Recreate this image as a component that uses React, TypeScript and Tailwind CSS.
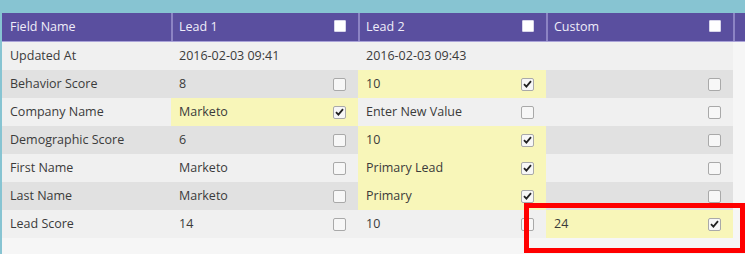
import type { ReactNode } from "react";

type Cell = { value: string; checked?: boolean; highlight?: boolean; noBox?: boolean };

type Row = {
  field: string;
  lead1: Cell;
  lead2: Cell;
  custom: Cell;
};

const rows: Row[] = [
  {
    field: "Updated At",
    lead1: { value: "2016-02-03 09:41", noBox: true },
    lead2: { value: "2016-02-03 09:43", noBox: true },
    custom: { value: "", noBox: true },
  },
  {
    field: "Behavior Score",
    lead1: { value: "8" },
    lead2: { value: "10", checked: true, highlight: true },
    custom: { value: "" },
  },
  {
    field: "Company Name",
    lead1: { value: "Marketo", checked: true, highlight: true },
    lead2: { value: "Enter New Value" },
    custom: { value: "" },
  },
  {
    field: "Demographic Score",
    lead1: { value: "6" },
    lead2: { value: "10", checked: true, highlight: true },
    custom: { value: "" },
  },
  {
    field: "First Name",
    lead1: { value: "Marketo" },
    lead2: { value: "Primary Lead", checked: true, highlight: true },
    custom: { value: "" },
  },
  {
    field: "Last Name",
    lead1: { value: "Marketo" },
    lead2: { value: "Primary", checked: true, highlight: true },
    custom: { value: "" },
  },
  {
    field: "Lead Score",
    lead1: { value: "14" },
    lead2: { value: "10" },
    custom: { value: "24", checked: true, highlight: true },
  },
];

const gridCols = "grid grid-cols-[169px_187px_188px_187px_12px]";

function CheckBox({ checked }: { checked?: boolean }) {
  return (
    <span className="flex h-[13px] w-[13px] items-center justify-center rounded-[2px] border border-[#a9a9a9] bg-[#f7f7f7]">
      {checked && (
        <svg width="9" height="8" viewBox="0 0 9 8">
          <path d="M1 4.2 L3.4 6.6 L8 1.2" fill="none" stroke="#222" strokeWidth="1.8" />
        </svg>
      )}
    </span>
  );
}

function HeaderCell({ children, box }: { children: ReactNode; box?: boolean }) {
  return (
    <div className="flex items-center justify-between border-l-2 border-[#8c84c4] pl-[6px] pr-[12px]">
      <span>{children}</span>
      {box && <span className="mb-[3px] h-[12px] w-[12px] rounded-[1px] border border-[#d8d6ea] bg-white" />}
    </div>
  );
}

function ValueCell({ cell }: { cell: Cell }) {
  return (
    <div
      className={`flex items-center justify-between pl-[8px] pr-[12px] ${
        cell.highlight ? "bg-[#f8f6b9]" : ""
      }`}
    >
      <span>{cell.value}</span>
      {!cell.noBox && <CheckBox checked={cell.checked} />}
    </div>
  );
}

export default function App() {
  return (
    <div className="relative h-[254px] w-[745px] overflow-hidden bg-[#87c4d2] pl-[2px] pt-[13px] font-['Open_Sans','Liberation_Sans',sans-serif] text-[12.5px]">
      <div className="h-full bg-[#f6f6f6]">
        <div className={`${gridCols} h-[29px] border-b border-[#aaa3d8] bg-[#5a4f9f] text-[#efedf9]`}>
          <div className="flex items-center pl-[8px]">Field Name</div>
          <HeaderCell box>Lead 1</HeaderCell>
          <HeaderCell box>Lead 2</HeaderCell>
          <HeaderCell box>Custom</HeaderCell>
          <div className="border-l-2 border-[#8c84c4]" />
        </div>

        {rows.map((row, i) => (
          <div
            key={row.field}
            className={`${gridCols} h-[28px] text-[#3b3b3b] ${i % 2 === 0 ? "bg-[#f0f0f0]" : "bg-[#e1e1e1]"}`}
          >
            <div className="flex items-center pl-[8px]">{row.field}</div>
            <ValueCell cell={row.lead1} />
            <ValueCell cell={row.lead2} />
            <ValueCell cell={row.custom} />
            <div className="bg-[#f6f6f6]" />
          </div>
        ))}
      </div>

      <div className="absolute left-[524px] top-[203px] h-[50px] w-[221px] border-[5px] border-[#ff0000]" />
    </div>
  );
}
